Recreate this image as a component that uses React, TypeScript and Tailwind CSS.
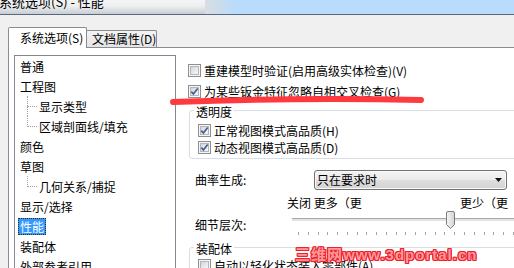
import React from "react";

function CheckBox({ checked = false }: { checked?: boolean }) {
  return (
    <span className="relative flex h-[13px] w-[13px] shrink-0 items-center justify-center border border-[#8f8f8f] bg-[#f6f6f6]">
      <span className="h-[9px] w-[9px] border border-[#b2b7bd] bg-[linear-gradient(135deg,#d3d7dc,#f8f8f8)]" />
      {checked && (
        <svg className="absolute left-0 top-0" width="11" height="11" viewBox="0 0 11 11">
          <path d="M2.3 5.6 L4.4 8 L8.7 2.4" fill="none" stroke="#485c94" strokeWidth="1.7" />
        </svg>
      )}
    </span>
  );
}

function CheckRow({ checked, text, h }: { checked?: boolean; text: string; h: string }) {
  return (
    <div className={"flex items-center gap-[3px] " + h}>
      <CheckBox checked={checked} />
      <span className="whitespace-nowrap text-[12px] leading-[16px]">{text}</span>
    </div>
  );
}

type Item = { t: string; child?: boolean; last?: boolean; sel?: boolean };
const items: Item[] = [
  { t: "普通" },
  { t: "工程图" },
  { t: "显示类型", child: true },
  { t: "区域剖面线/填充", child: true, last: true },
  { t: "颜色" },
  { t: "草图" },
  { t: "几何关系/捕捉", child: true, last: true },
  { t: "显示/选择" },
  { t: "性能", sel: true },
  { t: "装配体" },
  { t: "外部参考引用" },
];

function Tree() {
  return (
    <div className="ml-[5px] mt-[7px] h-[240px] w-[162px] shrink-0 overflow-hidden border border-[#828790] bg-white">
      {items.map((it) =>
        it.child ? (
          <div key={it.t} className="relative flex h-[20px] items-center pl-[24px]">
            <span
              className={
                "absolute left-[12px] top-0 border-l border-dotted border-[#a0a0a0] " +
                (it.last ? "h-[11px]" : "h-[20px]")
              }
            />
            <span className="absolute left-[12px] top-[10px] w-[10px] border-t border-dotted border-[#a0a0a0]" />
            <span className="whitespace-nowrap text-[12px] leading-[17px]">{it.t}</span>
          </div>
        ) : (
          <div key={it.t} className="flex h-[20px] items-center pl-[3px]">
            <span
              className={
                "whitespace-nowrap px-[2px] text-[12px] leading-[17px] " +
                (it.sel ? "bg-[#3399ff] text-white outline-1 -outline-offset-1 outline-dotted outline-[#3a2a10]" : "")
              }
            >
              {it.t}
            </span>
          </div>
        )
      )}
    </div>
  );
}

function Group({ label, children, cls }: { label: string; children: React.ReactNode; cls: string }) {
  return (
    <div className={"relative ml-[1px] w-[340px] shrink-0 rounded-[3px] border border-[#d5dfe5] pl-[8px] " + cls}>
      <span className="absolute left-[4px] top-[-7px] bg-white px-[2px] text-[12px] leading-[16px]">{label}</span>
      {children}
    </div>
  );
}

function Slider() {
  const ticks = Array.from({ length: 23 }, (_, i) => i);
  return (
    <div className="relative h-[26px] w-[240px] shrink-0">
      <div className="absolute left-0 right-0 top-[7px] h-[3px] border-t border-[#a9a9a9] bg-[#e4e4e4]" />
      <div className="absolute left-[6px] top-[21px] flex w-[216px] justify-between">
        {ticks.map((i) => (
          <span key={i} className="h-[3px] w-[1px] bg-[#a4a4a4]" />
        ))}
      </div>
      <svg className="absolute left-[153px] top-0" width="11" height="19" viewBox="0 0 11 19">
        <defs>
          <linearGradient id="thumbg" x1="0" x2="1" y1="0" y2="0">
            <stop offset="0" stopColor="#f6f6f6" />
            <stop offset="1" stopColor="#d2d2d2" />
          </linearGradient>
        </defs>
        <path
          d="M1.5 2 Q1.5 0.5 3 0.5 H8 Q9.5 0.5 9.5 2 V13.5 L5.5 17.5 L1.5 13.5 Z"
          fill="url(#thumbg)"
          stroke="#7d7d7d"
        />
      </svg>
    </div>
  );
}

export default function App() {
  return (
    <div className="relative h-[268px] w-[514px] overflow-hidden bg-[#f0f0f0] font-['Noto_Sans_CJK_SC','Noto_Sans',sans-serif] text-black">
      {/* title bar */}
      <div className="flex h-[14px] overflow-hidden">
        <div className="w-[205px] shrink-0 bg-[linear-gradient(to_bottom,#f3f4f6_0%,#eceef0_45%,#c9ccd1_100%)]">
          <div className="-ml-[1px] -mt-[5px] whitespace-nowrap text-[13px] leading-[13px]">系统选项(S) - 性能</div>
        </div>
        <div className="w-[32px] shrink-0 bg-[linear-gradient(to_right,#d9dde2,#b9dbfc)]" />
        <div className="flex-1 bg-[#b9dbfc]" />
      </div>
      <div className="h-[1px] bg-[#56697f]" />

      {/* tabs */}
      <div className="flex items-end pl-[8px] pt-[12px]">
        <div className="relative z-10 -mb-[1px] flex h-[21px] w-[79px] items-center rounded-t-[2px] border border-b-0 border-[#898c95] bg-white pl-[11px]">
          <span className="whitespace-nowrap text-[12px] leading-[16px]">系统选项(S)</span>
        </div>
        <div className="-ml-[1px] flex h-[17px] w-[71px] items-center rounded-t-[2px] border border-b-0 border-[#898c95] bg-[linear-gradient(to_bottom,#f4f4f4,#e4e4e4)] pl-[5px]">
          <span className="whitespace-nowrap text-[12px] leading-[16px]">文档属性(D)</span>
        </div>
      </div>

      {/* panel */}
      <div className="ml-[8px] flex h-[240px] border-l border-t border-[#898c95] bg-white">
        <Tree />
        <div className="flex min-w-0 flex-1 flex-col overflow-hidden pl-[12px] pt-[12px]">
          <CheckRow text="重建模型时验证(启用高级实体检查)(V)" h="h-[21px]" />
          <CheckRow checked text="为某些钣金特征忽略自相交叉检查(G)" h="h-[21px]" />

          <Group label="透明度" cls="mt-[8px] pt-[11px] pb-[2px]">
            <CheckRow checked text="正常视图模式高品质(H)" h="h-[17px]" />
            <CheckRow checked text="动态视图模式高品质(D)" h="h-[17px]" />
          </Group>

          <div className="mt-[11px] flex h-[20px] shrink-0 items-center pl-[7px]">
            <span className="w-[119px] shrink-0 text-[12px] leading-[16px]">曲率生成:</span>
            <div className="flex h-[20px] w-[193px] shrink-0 items-center justify-between rounded-[3px] border border-[#707070] bg-[linear-gradient(to_bottom,#f3f3f3_0%,#ebebeb_50%,#dedede_50%,#d2d2d2_100%)] pl-[2px] pr-[4px] shadow-[inset_0_0_0_1px_#fafafa]">
              <span className="whitespace-nowrap text-[12px] leading-[16px]">只在要求时</span>
              <svg width="7" height="4" viewBox="0 0 7 4">
                <path d="M0 0 H7 L3.5 4 Z" fill="#111" />
              </svg>
            </div>
          </div>

          <div className="mt-[5px] flex h-[16px] shrink-0 items-center pl-[99px]">
            <span className="w-[173px] shrink-0 whitespace-nowrap text-[12px] leading-[16px]">关闭 更多（更</span>
            <span className="whitespace-nowrap text-[12px] leading-[16px]">更少（更</span>
          </div>

          <div className="flex h-[26px] shrink-0">
            <span className="mt-[6px] w-[104px] shrink-0 pl-[7px] text-[12px] leading-[16px]">细节层次:</span>
            <Slider />
          </div>

          <Group label="装配体" cls="mt-[10px] pt-[9px] pb-[2px]">
            <CheckRow text="自动以轻化状态装入零部件(A)" h="h-[17px]" />
          </Group>
        </div>
      </div>

      {/* annotations */}
      <svg className="pointer-events-none absolute left-0 top-0" width="514" height="268" viewBox="0 0 514 268">
        <path d="M173 102 Q 300 97.5 421 100" fill="none" stroke="#ff3a3f" strokeWidth="6" strokeLinecap="round" />
      </svg>
      <span className="pointer-events-none absolute left-[295px] top-[246px] whitespace-nowrap font-['Liberation_Sans','Noto_Sans_CJK_SC',sans-serif] text-[15px] font-bold leading-[17px] tracking-[1px] text-[#ff9a9a] [text-shadow:1px_0_#f0202c,-1px_0_#f0202c,0_1px_#f0202c,0_-1px_#f0202c,1px_1px_#f0202c,-1px_-1px_#f0202c,1px_-1px_#f0202c,-1px_1px_#f0202c]">
        三维网www.3dportal.cn
      </span>
    </div>
  );
}
